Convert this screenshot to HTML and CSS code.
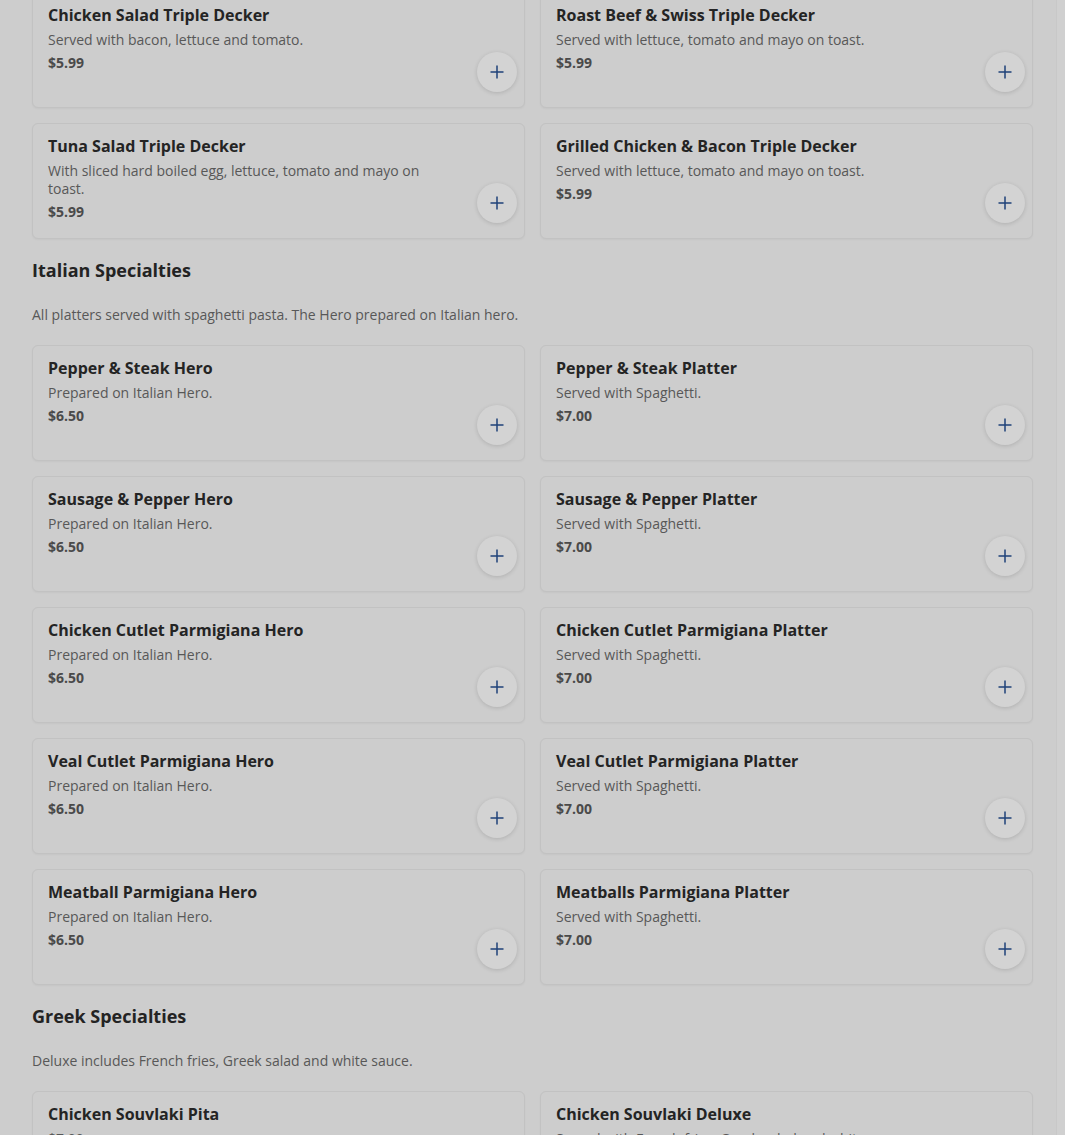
FILE: index.html
```html
<!DOCTYPE html>
<html>
<head>
<meta charset="utf-8">
<link rel="stylesheet" href="styles.css">
</head>
<body>
<div class="page">
  <div class="grid">
    <div class="card"><div class="info"><div class="name">Chicken Salad Triple Decker</div><div class="desc">Served with bacon, lettuce and tomato.</div><div class="price">$5.99</div></div><button class="add"><svg viewBox="0 0 16 16" width="16" height="16"><path d="M8 1.5v13M1.5 8h13" stroke="currentColor" stroke-width="1.5" fill="none"/></svg></button></div>
    <div class="card"><div class="info"><div class="name">Roast Beef &amp; Swiss Triple Decker</div><div class="desc">Served with lettuce, tomato and mayo on toast.</div><div class="price">$5.99</div></div><button class="add"><svg viewBox="0 0 16 16" width="16" height="16"><path d="M8 1.5v13M1.5 8h13" stroke="currentColor" stroke-width="1.5" fill="none"/></svg></button></div>
    <div class="card"><div class="info"><div class="name">Tuna Salad Triple Decker</div><div class="desc">With sliced hard boiled egg, lettuce, tomato and mayo on toast.</div><div class="price">$5.99</div></div><button class="add"><svg viewBox="0 0 16 16" width="16" height="16"><path d="M8 1.5v13M1.5 8h13" stroke="currentColor" stroke-width="1.5" fill="none"/></svg></button></div>
    <div class="card"><div class="info"><div class="name">Grilled Chicken &amp; Bacon Triple Decker</div><div class="desc">Served with lettuce, tomato and mayo on toast.</div><div class="price">$5.99</div></div><button class="add"><svg viewBox="0 0 16 16" width="16" height="16"><path d="M8 1.5v13M1.5 8h13" stroke="currentColor" stroke-width="1.5" fill="none"/></svg></button></div>
  </div>

  <h2 class="section">Italian Specialties</h2>
  <p class="section-desc">All platters served with spaghetti pasta. The Hero prepared on Italian hero.</p>
  <div class="grid">
    <div class="card"><div class="info"><div class="name">Pepper &amp; Steak Hero</div><div class="desc">Prepared on Italian Hero.</div><div class="price">$6.50</div></div><button class="add"><svg viewBox="0 0 16 16" width="16" height="16"><path d="M8 1.5v13M1.5 8h13" stroke="currentColor" stroke-width="1.5" fill="none"/></svg></button></div>
    <div class="card"><div class="info"><div class="name">Pepper &amp; Steak Platter</div><div class="desc">Served with Spaghetti.</div><div class="price">$7.00</div></div><button class="add"><svg viewBox="0 0 16 16" width="16" height="16"><path d="M8 1.5v13M1.5 8h13" stroke="currentColor" stroke-width="1.5" fill="none"/></svg></button></div>
    <div class="card"><div class="info"><div class="name">Sausage &amp; Pepper Hero</div><div class="desc">Prepared on Italian Hero.</div><div class="price">$6.50</div></div><button class="add"><svg viewBox="0 0 16 16" width="16" height="16"><path d="M8 1.5v13M1.5 8h13" stroke="currentColor" stroke-width="1.5" fill="none"/></svg></button></div>
    <div class="card"><div class="info"><div class="name">Sausage &amp; Pepper Platter</div><div class="desc">Served with Spaghetti.</div><div class="price">$7.00</div></div><button class="add"><svg viewBox="0 0 16 16" width="16" height="16"><path d="M8 1.5v13M1.5 8h13" stroke="currentColor" stroke-width="1.5" fill="none"/></svg></button></div>
    <div class="card"><div class="info"><div class="name">Chicken Cutlet Parmigiana Hero</div><div class="desc">Prepared on Italian Hero.</div><div class="price">$6.50</div></div><button class="add"><svg viewBox="0 0 16 16" width="16" height="16"><path d="M8 1.5v13M1.5 8h13" stroke="currentColor" stroke-width="1.5" fill="none"/></svg></button></div>
    <div class="card"><div class="info"><div class="name">Chicken Cutlet Parmigiana Platter</div><div class="desc">Served with Spaghetti.</div><div class="price">$7.00</div></div><button class="add"><svg viewBox="0 0 16 16" width="16" height="16"><path d="M8 1.5v13M1.5 8h13" stroke="currentColor" stroke-width="1.5" fill="none"/></svg></button></div>
    <div class="card"><div class="info"><div class="name">Veal Cutlet Parmigiana Hero</div><div class="desc">Prepared on Italian Hero.</div><div class="price">$6.50</div></div><button class="add"><svg viewBox="0 0 16 16" width="16" height="16"><path d="M8 1.5v13M1.5 8h13" stroke="currentColor" stroke-width="1.5" fill="none"/></svg></button></div>
    <div class="card"><div class="info"><div class="name">Veal Cutlet Parmigiana Platter</div><div class="desc">Served with Spaghetti.</div><div class="price">$7.00</div></div><button class="add"><svg viewBox="0 0 16 16" width="16" height="16"><path d="M8 1.5v13M1.5 8h13" stroke="currentColor" stroke-width="1.5" fill="none"/></svg></button></div>
    <div class="card"><div class="info"><div class="name">Meatball Parmigiana Hero</div><div class="desc">Prepared on Italian Hero.</div><div class="price">$6.50</div></div><button class="add"><svg viewBox="0 0 16 16" width="16" height="16"><path d="M8 1.5v13M1.5 8h13" stroke="currentColor" stroke-width="1.5" fill="none"/></svg></button></div>
    <div class="card"><div class="info"><div class="name">Meatballs Parmigiana Platter</div><div class="desc">Served with Spaghetti.</div><div class="price">$7.00</div></div><button class="add"><svg viewBox="0 0 16 16" width="16" height="16"><path d="M8 1.5v13M1.5 8h13" stroke="currentColor" stroke-width="1.5" fill="none"/></svg></button></div>
  </div>

  <h2 class="section">Greek Specialties</h2>
  <p class="section-desc">Deluxe includes French fries, Greek salad and white sauce.</p>
  <div class="grid">
    <div class="card"><div class="info"><div class="name">Chicken Souvlaki Pita</div><div class="desc">$7.00</div><div class="price">$7.00</div></div><button class="add"><svg viewBox="0 0 16 16" width="16" height="16"><path d="M8 1.5v13M1.5 8h13" stroke="currentColor" stroke-width="1.5" fill="none"/></svg></button></div>
    <div class="card"><div class="info"><div class="name">Chicken Souvlaki Deluxe</div><div class="desc">Served with French fries, Greek salad and white sauce.</div><div class="price">$11.00</div></div><button class="add"><svg viewBox="0 0 16 16" width="16" height="16"><path d="M8 1.5v13M1.5 8h13" stroke="currentColor" stroke-width="1.5" fill="none"/></svg></button></div>
  </div>
</div>
<div class="scrollbar"></div>
</body>
</html>
```
FILE: styles.css
```css
html, body {
  margin: 0;
  padding: 0;
  background: #cdcdcd;
  overflow: hidden;
  height: 1135px;
}
body {
  font-family: "Open Sans", "Liberation Sans", sans-serif;
  color: #232323;
}
.page {
  margin: -8px 0 0 32px;
  width: 1001px;
}
.grid {
  display: grid;
  grid-template-columns: 1fr 1fr;
  gap: 15px;
}
.card {
  box-sizing: border-box;
  height: 116px;
  border: 1px solid #c2c2c2;
  border-radius: 6px;
  background: #cdcdcd;
  display: flex;
  padding: 11px 7px 15px 15px;
  box-shadow: 0 1px 2px rgba(0,0,0,0.04);
}
.info {
  flex: 1;
  min-width: 0;
  padding-right: 30px;
}
.name {
  font-size: 16px;
  line-height: 22px;
  font-weight: 700;
  color: #242424;
}
.desc {
  margin-top: 5px;
  font-size: 14px;
  line-height: 18px;
  color: #585858;
  max-width: 395px;
}
.price {
  margin-top: 5px;
  font-size: 14px;
  line-height: 18px;
  font-weight: 700;
  color: #4a4a4a;
}
.add {
  align-self: flex-end;
  flex: none;
  width: 40px;
  height: 40px;
  border-radius: 50%;
  border: none;
  padding: 0;
  background: #d3d3d3;
  color: #1f4279;
  box-shadow: 0 1px 4px rgba(0,0,0,0.14);
  display: flex;
  align-items: center;
  justify-content: center;
}
.section {
  margin: 19px 0 0 0;
  font-size: 18px;
  line-height: 24px;
  font-weight: 700;
  color: #232323;
}
.section-desc {
  margin: 23px 0 20px 0;
  font-size: 14px;
  line-height: 20px;
  color: #585858;
}
.scrollbar {
  position: fixed;
  top: 0;
  right: 0;
  width: 8px;
  height: 100%;
  background: #d0d0d0;
  border-left: 1px solid #c8c8c8;
}
```
